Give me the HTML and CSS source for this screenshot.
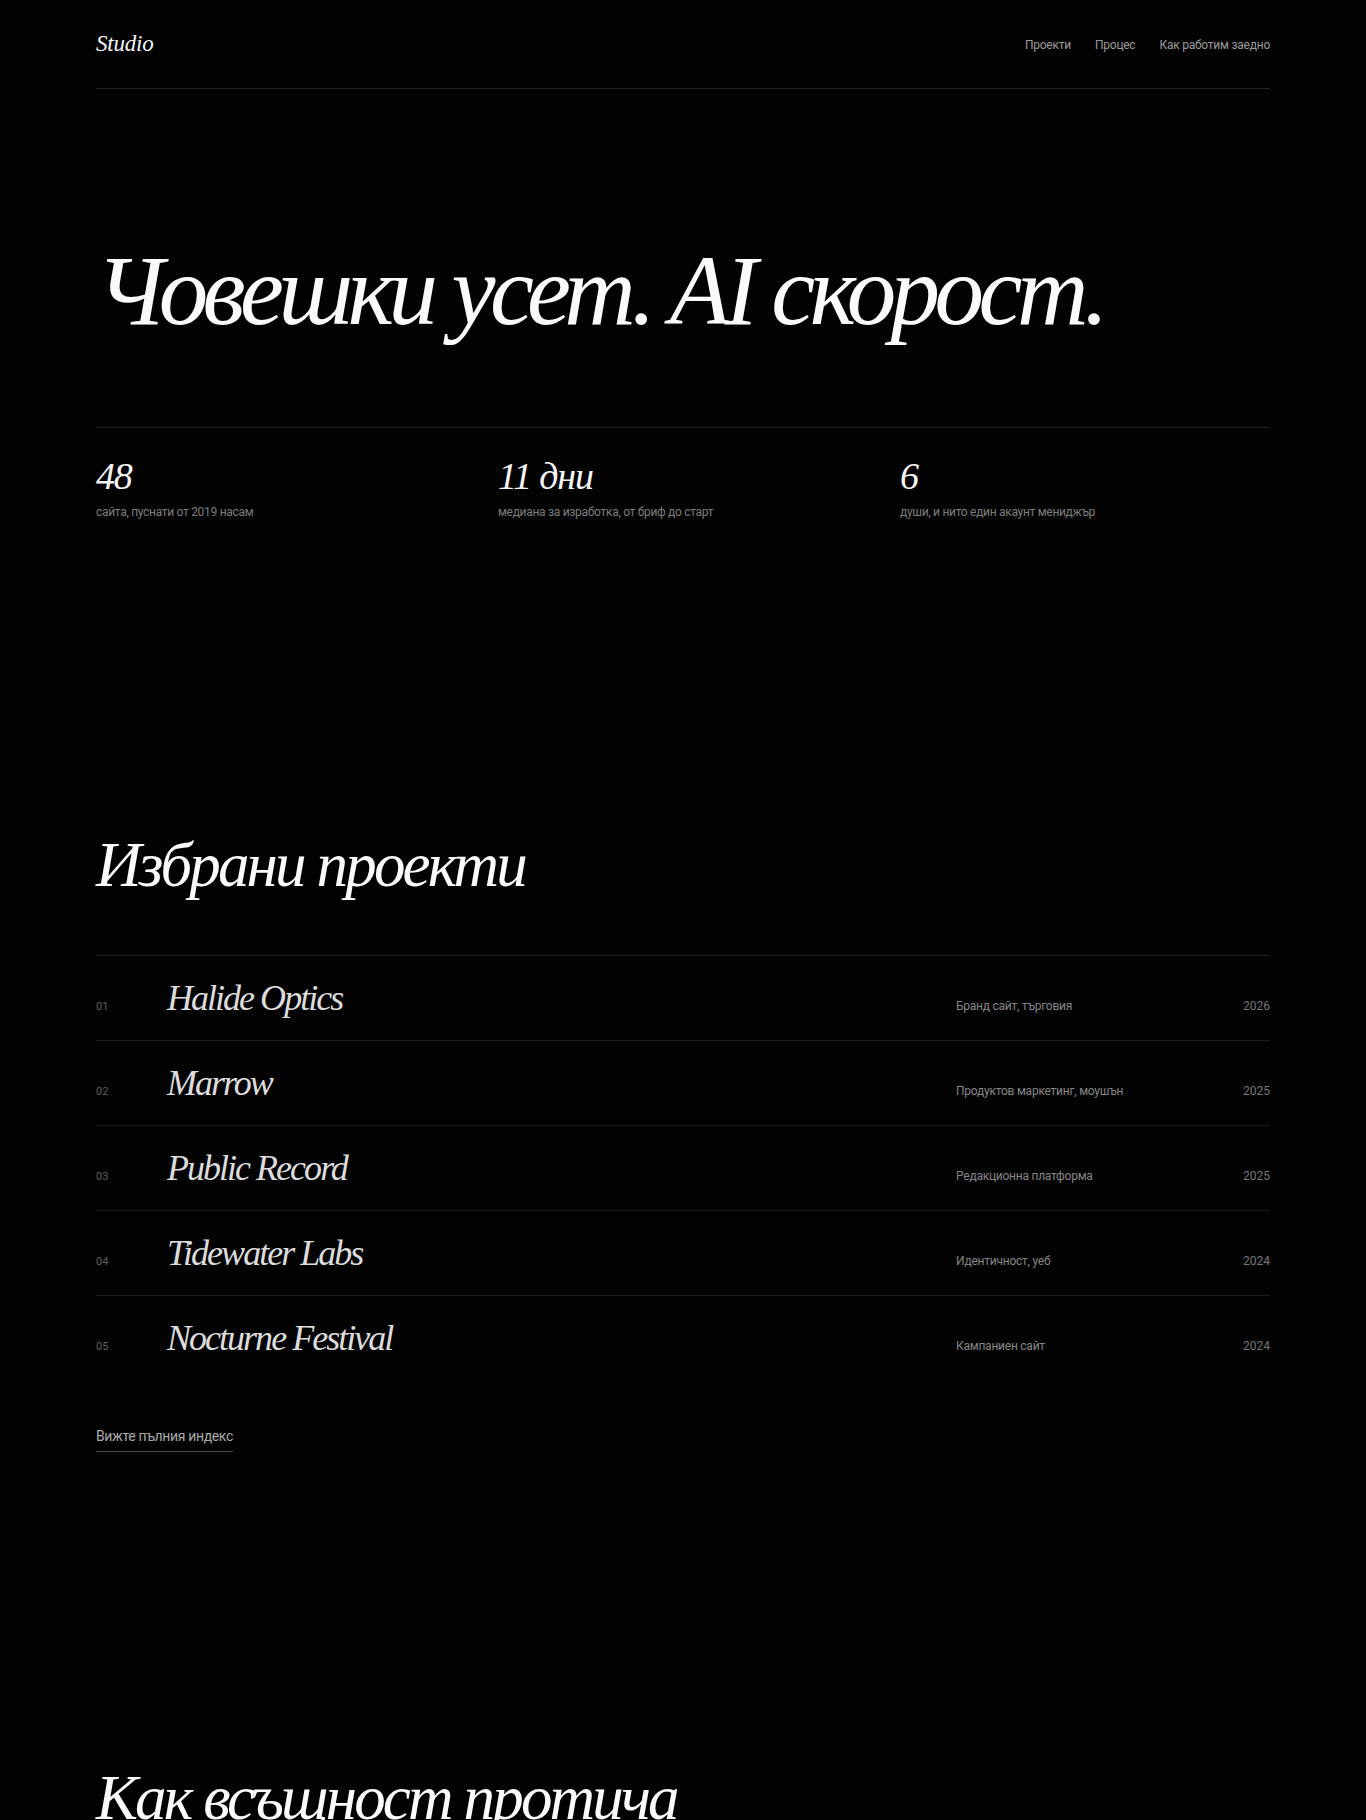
FILE: index.html
```html
<!DOCTYPE html>
<html lang="bg">
<head>
<meta charset="utf-8">
<title>Studio</title>
<link rel="stylesheet" href="styles.css">
</head>
<body>
<div class="page">
  <header class="site-header">
    <a class="logo" href="#">Studio</a>
    <nav class="nav">
      <a href="#">Проекти</a>
      <a href="#">Процес</a>
      <a href="#">Как работим заедно</a>
    </nav>
  </header>

  <section class="hero">
    <h1 class="hero-title">Човешки усет. AI скорост.</h1>
    <div class="stats">
      <div class="stat">
        <div class="stat-num">48</div>
        <div class="stat-label">сайта, пуснати от 2019 насам</div>
      </div>
      <div class="stat">
        <div class="stat-num">11 дни</div>
        <div class="stat-label">медиана за изработка, от бриф до старт</div>
      </div>
      <div class="stat">
        <div class="stat-num">6</div>
        <div class="stat-label">души, и нито един акаунт мениджър</div>
      </div>
    </div>
  </section>

  <section class="projects">
    <h2 class="section-title">Избрани проекти</h2>
    <ul class="project-list">
      <li class="project"><span class="p-num">01</span><span class="p-name">Halide Optics</span><span class="p-cat">Бранд сайт, търговия</span><span class="p-year">2026</span></li>
      <li class="project"><span class="p-num">02</span><span class="p-name">Marrow</span><span class="p-cat">Продуктов маркетинг, моушън</span><span class="p-year">2025</span></li>
      <li class="project"><span class="p-num">03</span><span class="p-name">Public Record</span><span class="p-cat">Редакционна платформа</span><span class="p-year">2025</span></li>
      <li class="project"><span class="p-num">04</span><span class="p-name">Tidewater Labs</span><span class="p-cat">Идентичност, уеб</span><span class="p-year">2024</span></li>
      <li class="project"><span class="p-num">05</span><span class="p-name">Nocturne Festival</span><span class="p-cat">Кампаниен сайт</span><span class="p-year">2024</span></li>
    </ul>
    <a class="index-link" href="#">Вижте пълния индекс</a>
  </section>

  <section class="process">
    <h2 class="section-title">Как всъщност протича</h2>
  </section>
</div>
</body>
</html>
```

FILE: styles.css
```css
* { box-sizing: border-box; }
html, body { margin: 0; padding: 0; }
body {
  background: #030303;
  color: #f2f2f2;
  font-family: Roboto, "Liberation Sans", Arial, sans-serif;
}
a { color: inherit; text-decoration: none; }

.page {
  padding: 0 96px;
}

.site-header {
  height: 89px;
  display: flex;
  align-items: center;
  justify-content: space-between;
  border-bottom: 1px solid #222;
}
.logo {
  font-family: "Liberation Serif", "Times New Roman", serif;
  font-style: italic;
  font-size: 23px;
  color: #f5f5f5;
  letter-spacing: -0.01em;
}
.nav {
  display: flex;
  gap: 24px;
  padding-top: 2px;
}
.nav a {
  font-size: 12px;
  color: #9a9a9a;
  letter-spacing: -0.02em;
}

.hero {
  padding-top: 152px;
}
.hero-title {
  margin: 0;
  font-family: "Liberation Serif", "Times New Roman", serif;
  font-style: italic;
  font-weight: 400;
  font-size: 99px;
  line-height: 1;
  letter-spacing: -0.056em;
  color: #fafafa;
}
.stats {
  margin-top: 87px;
  border-top: 1px solid #1e1e1e;
  padding-top: 29px;
  display: grid;
  grid-template-columns: repeat(3, 1fr);
  gap: 32px;
}
.stat-num {
  font-family: "Liberation Serif", "Times New Roman", serif;
  font-style: italic;
  font-size: 38px;
  line-height: 1;
  letter-spacing: -0.03em;
  color: #f5f5f5;
}
.stat-label {
  margin-top: 10px;
  font-size: 12px;
  color: #7c7c7c;
  letter-spacing: -0.025em;
}

.projects {
  padding-top: 312px;
}
.section-title {
  margin: 0;
  font-family: "Liberation Serif", "Times New Roman", serif;
  font-style: italic;
  font-weight: 400;
  font-size: 63px;
  line-height: 1.1;
  letter-spacing: -0.045em;
  color: #fafafa;
}
.project-list {
  list-style: none;
  margin: 55px 0 0;
  padding: 0;
}
.project {
  display: grid;
  grid-template-columns: 47px 1fr 210px 80px;
  column-gap: 24px;
  align-items: baseline;
  height: 85px;
  padding-top: 23px;
  border-top: 1px solid #1c1c1c;
}
.p-num {
  font-size: 11px;
  color: #5e5e5e;
}
.p-name {
  font-family: "Liberation Serif", "Times New Roman", serif;
  font-style: italic;
  font-size: 36px;
  line-height: 1.1;
  letter-spacing: -0.055em;
  color: #dcdcdc;
}
.p-cat {
  font-size: 12px;
  color: #858585;
  letter-spacing: -0.02em;
}
.p-year {
  font-size: 12px;
  color: #777;
  text-align: right;
}

.index-link {
  display: inline-block;
  margin-top: 48px;
  font-size: 14px;
  color: #a8a8a8;
  letter-spacing: -0.025em;
  padding-bottom: 7px;
  border-bottom: 1px solid #4a4a4a;
}

.process {
  padding-top: 312px;
  padding-bottom: 120px;
}
```
